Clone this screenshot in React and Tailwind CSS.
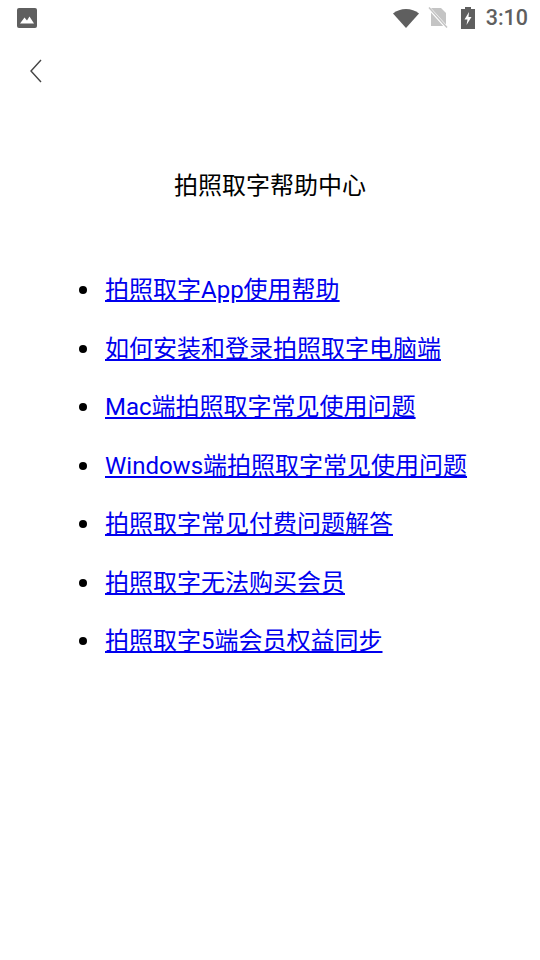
import React from 'react';

const links = [
  '拍照取字App使用帮助',
  '如何安装和登录拍照取字电脑端',
  'Mac端拍照取字常见使用问题',
  'Windows端拍照取字常见使用问题',
  '拍照取字常见付费问题解答',
  '拍照取字无法购买会员',
  '拍照取字5端会员权益同步',
];

const StatusBar = () => (
  <div className="flex h-9 items-center justify-between pl-[17px] pr-3 text-[#5f5f5f]">
    <svg width="20" height="20" viewBox="0 0 20 20">
      <rect x="0" y="0" width="20" height="20" rx="2" fill="#5f5f5f" />
      <path d="M3 15.5 L7.5 9.5 L10 12.5 L12.5 8.5 L17 15.5 Z" fill="#fff" />
    </svg>
    <div className="flex items-center">
      <svg width="26" height="20" viewBox="0 0 26 20">
        <path d="M0 5.5 C7 -0.5 19 -0.5 26 5.5 L13 20 Z" fill="#5f5f5f" />
      </svg>
      <svg className="ml-[9px]" width="20" height="22" viewBox="0 0 20 22">
        <path d="M3 1 H13 L18 6 V19 H3 Z" fill="#c4c4c4" />
        <path d="M1 1 L19 21" stroke="#fff" strokeWidth="3" />
        <path d="M1 0.5 L19 20.5" stroke="#c4c4c4" strokeWidth="1.5" />
      </svg>
      <svg className="ml-[13px]" width="14" height="22" viewBox="0 0 14 22">
        <path d="M4 0 H10 V2 H14 V22 H0 V2 H4 Z" fill="#5f5f5f" />
        <path d="M8 5 L3.5 12.5 H6.5 L5.5 18 L10.5 10 H7.5 Z" fill="#fff" />
      </svg>
      <span className="ml-[11px] font-['Roboto',sans-serif] text-[21.5px] font-medium leading-none">3:10</span>
    </div>
  </div>
);

export default function App() {
  return (
    <div className="min-h-[960px] bg-white font-['Roboto','Noto_Sans_CJK_SC',sans-serif] text-black">
      <StatusBar />
      <div className="mt-[23px] pl-[29px]">
        <svg className="block" width="14" height="24" viewBox="0 0 14 24" fill="none">
          <path d="M12 1 L2 12 L12 23" stroke="#444" strokeWidth="1.4" />
        </svg>
      </div>
      <h1 className="mt-[87px] text-center text-[24px] font-normal leading-[32px]">拍照取字帮助中心</h1>
      <ul className="mt-[72px] flex flex-col gap-[26px] pl-[79px] text-[24px] leading-[32.5px]">
        {links.map((item) => (
          <li key={item} className="flex items-center">
            <span className="mr-[18px] h-2 w-2 shrink-0 rounded-full bg-black" />
            <a href="#" className="text-[#0000ee] underline">{item}</a>
          </li>
        ))}
      </ul>
    </div>
  );
}
